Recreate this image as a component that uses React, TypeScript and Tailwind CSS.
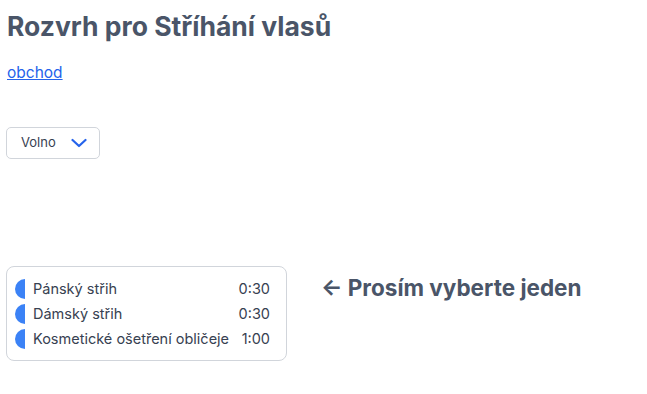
import React from "react";

const services = [
  { name: "Pánský střih", time: "0:30" },
  { name: "Dámský střih", time: "0:30" },
  { name: "Kosmetické ošetření obličeje", time: "1:00" },
];

export default function App() {
  return (
    <div className="min-h-screen bg-white pl-[7px] pt-[10px] font-['Inter',sans-serif]">
      <h1 className="text-[26.5px] leading-[32px] font-bold text-[#4a5568]">Rozvrh pro Stříhání vlasů</h1>
      <div className="mt-[18px] h-[22px]">
        <a href="#" className="text-[15.5px] leading-[22px] text-[#2563eb] underline">obchod</a>
      </div>
      <div className="mt-[45px] ml-[-1px] flex h-[32px] w-[94px] items-center rounded-[5px] border border-[#d1d5db] pl-[14px] text-[13px] text-[#374151]">
        <span>Volno</span>
        <svg className="ml-[15px]" width="16" height="10" viewBox="0 0 16 10" fill="none">
          <path d="M1.5 2 L8 8 L14.5 2" stroke="#2563eb" strokeWidth="2.2" strokeLinecap="round" strokeLinejoin="round" />
        </svg>
      </div>
      <div className="mt-[107px] ml-[-1px] flex items-start">
        <div className="w-[281px] rounded-[8px] border border-[#d1d5db] py-[9px] pl-[8px] pr-[16px]">
          {services.map((s) => (
            <div key={s.name} className="flex h-[25px] items-center">
              <span className="h-[20px] w-[10px] rounded-l-full bg-[#3b82f6]" />
              <span className="ml-[8px] flex-1 text-[14.5px] text-[#374151]">{s.name}</span>
              <span className="text-[14.5px] text-[#374151]">{s.time}</span>
            </div>
          ))}
        </div>
        <div className="ml-[34px] mt-[8px] text-[22.5px] leading-[28px] font-bold text-[#4a5568]">← Prosím vyberte jeden</div>
      </div>
    </div>
  );
}
